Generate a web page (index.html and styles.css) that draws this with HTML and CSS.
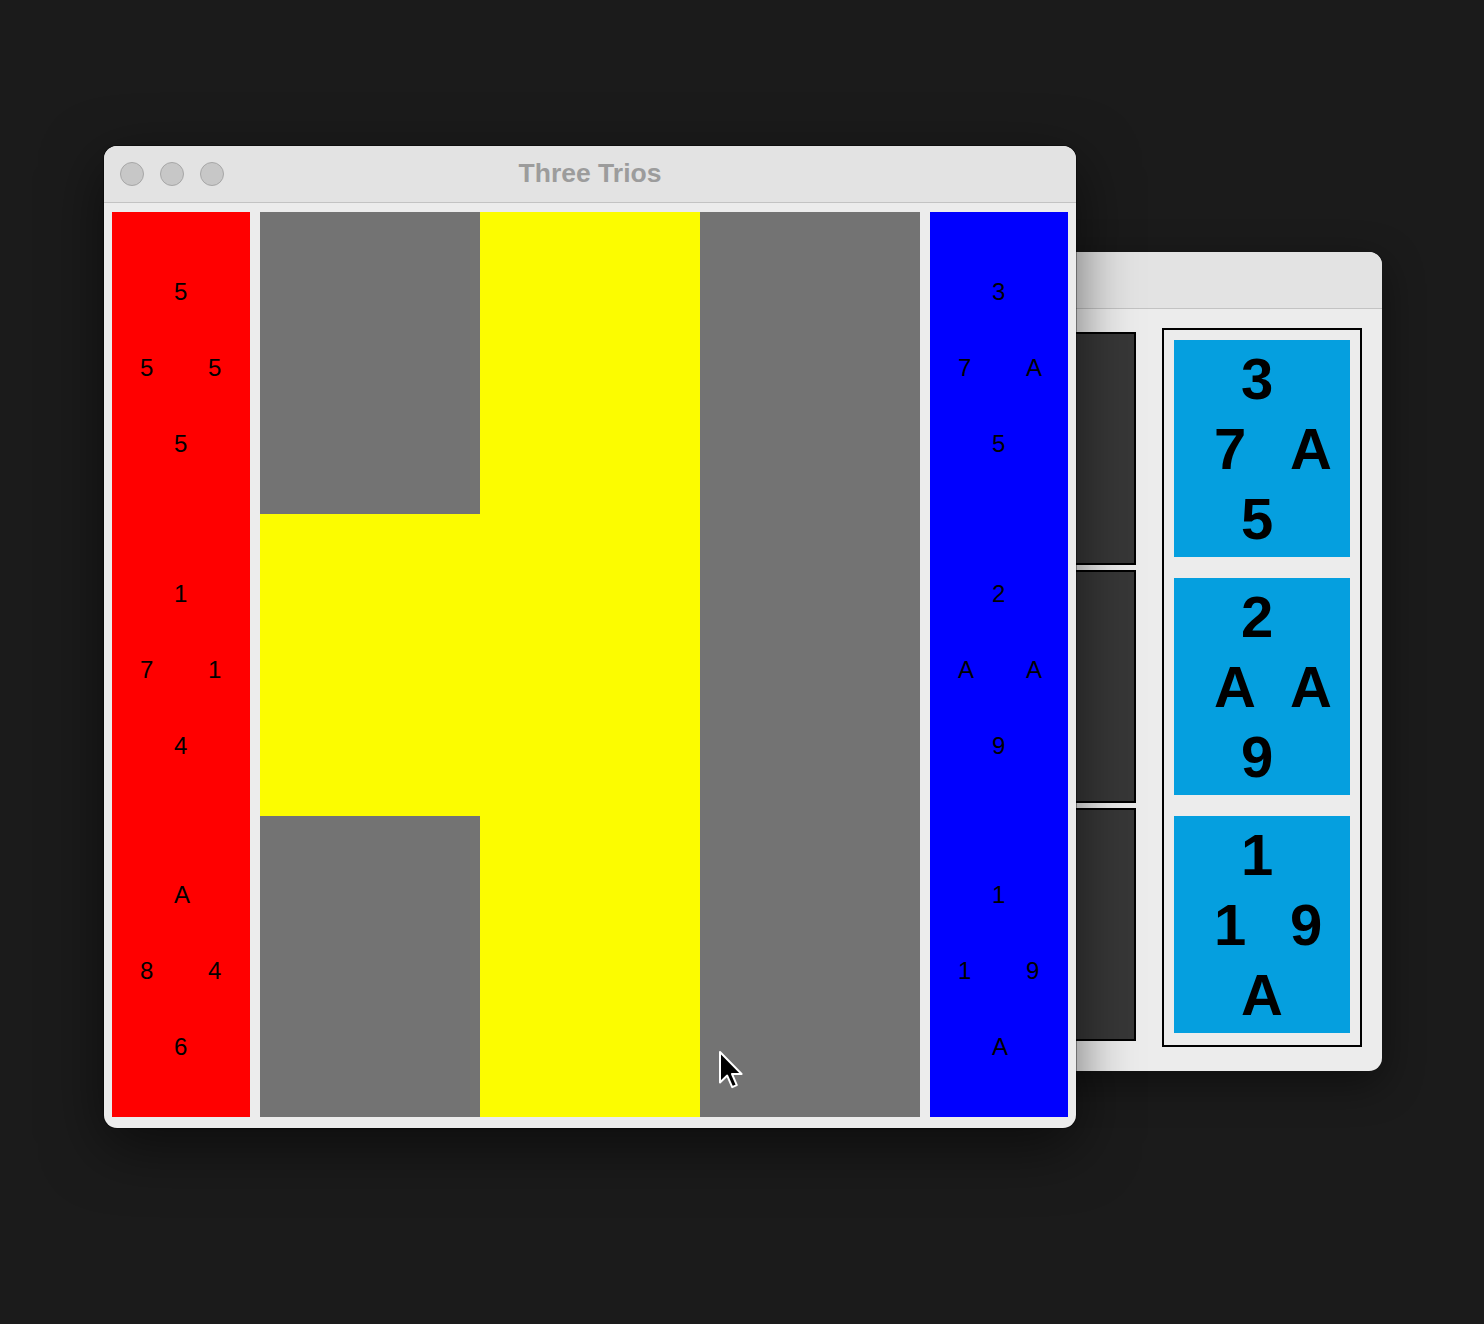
FILE: index.html
```html
<!DOCTYPE html>
<html>
<head>
<meta charset="utf-8">
<title>Three Trios</title>
<link rel="stylesheet" href="styles.css">
</head>
<body>
<div class="desktop">
  <div class="window back-window">
    <div class="titlebar"></div>
    <div class="back-body">
      <div class="hidden-hand">
        <div class="hidden-card"></div>
        <div class="hidden-card"></div>
        <div class="hidden-card"></div>
      </div>
      <div class="big-hand">
        <div class="big-card">
          <div class="big-row">3</div>
          <div class="big-mid"><span>7</span><span>A</span></div>
          <div class="big-row">5</div>
        </div>
        <div class="big-card">
          <div class="big-row">2</div>
          <div class="big-mid"><span>A</span><span>A</span></div>
          <div class="big-row">9</div>
        </div>
        <div class="big-card">
          <div class="big-row">1</div>
          <div class="big-mid"><span>1</span><span>9</span></div>
          <div class="big-row">A</div>
        </div>
      </div>
    </div>
  </div>

  <div class="window main-window">
    <div class="titlebar">
      <div class="lights">
        <span class="light"></span><span class="light"></span><span class="light"></span>
      </div>
      <div class="title">Three Trios</div>
    </div>
    <div class="main-body">
      <div class="hand red">
        <div class="card">
          <div class="row">5</div>
          <div class="mid"><span>5</span><span>5</span></div>
          <div class="row">5</div>
        </div>
        <div class="card">
          <div class="row">1</div>
          <div class="mid"><span>7</span><span>1</span></div>
          <div class="row">4</div>
        </div>
        <div class="card">
          <div class="row">A</div>
          <div class="mid"><span>8</span><span>4</span></div>
          <div class="row">6</div>
        </div>
      </div>
      <div class="board">
        <div class="cell hole"></div>
        <div class="cell empty"></div>
        <div class="cell hole"></div>
        <div class="cell empty"></div>
        <div class="cell empty"></div>
        <div class="cell hole"></div>
        <div class="cell hole"></div>
        <div class="cell empty"></div>
        <div class="cell hole"></div>
      </div>
      <div class="hand blue">
        <div class="card">
          <div class="row">3</div>
          <div class="mid"><span>7</span><span>A</span></div>
          <div class="row">5</div>
        </div>
        <div class="card">
          <div class="row">2</div>
          <div class="mid"><span>A</span><span>A</span></div>
          <div class="row">9</div>
        </div>
        <div class="card">
          <div class="row">1</div>
          <div class="mid"><span>1</span><span>9</span></div>
          <div class="row">A</div>
        </div>
      </div>
    </div>
  </div>

  <svg class="cursor" width="26" height="40" viewBox="0 0 13 20">
    <path d="M1 1 L1 16.2 L4.6 12.8 L7.1 18.6 L9.4 17.6 L7 12 L11.8 12 Z" fill="#000" stroke="#fff" stroke-width="1" stroke-linejoin="round"/>
  </svg>
</div>
</body>
</html>
```

FILE: styles.css
```css
* { box-sizing: border-box; }

html, body {
  margin: 0;
  padding: 0;
  background: #1b1b1b;
}

body {
  font-family: "Liberation Sans", Arial, sans-serif;
}

.desktop {
  position: relative;
  width: 1484px;
  height: 1324px;
  overflow: hidden;
}

.window {
  position: absolute;
  background: #ececec;
  border-radius: 13px;
  overflow: hidden;
}

.titlebar {
  height: 57px;
  background: #e3e3e3;
  border-bottom: 1px solid #c3c3c3;
  position: relative;
  display: flex;
  align-items: center;
}

/* ---------- back window ---------- */
.back-window {
  left: 930px;
  top: 252px;
  width: 452px;
  height: 819px;
  box-shadow: 0 12px 40px rgba(0, 0, 0, 0.45);
}

.back-body {
  display: flex;
  padding: 19px 20px 0 8px;
  gap: 26px;
}

.hidden-hand {
  width: 198px;
  display: flex;
  flex-direction: column;
  gap: 5px;
  margin-top: 4px;
}

.hidden-card {
  height: 233px;
  background: #373737;
  border: 2px solid #000;
}

.big-hand {
  width: 200px;
  border: 2px solid #000;
  padding: 10px 10px 12px 10px;
  display: flex;
  flex-direction: column;
  gap: 21px;
}

.big-card {
  height: 217px;
  background: #059fdf;
  padding-top: 4px;
  font-weight: bold;
  font-size: 58px;
  line-height: 70px;
  color: #000;
}

.big-row {
  padding-left: 67px;
}

.big-mid {
  padding-left: 40px;
  display: grid;
  grid-template-columns: 76px auto;
}

/* ---------- main window ---------- */
.main-window {
  left: 104px;
  top: 146px;
  width: 972px;
  height: 982px;
  box-shadow: 0 18px 60px rgba(0, 0, 0, 0.55), 0 0 0 1px rgba(0, 0, 0, 0.35);
}

.main-window .titlebar {
  height: 57px;
}

.lights {
  display: flex;
  gap: 16px;
  padding-left: 16px;
  padding-top: 0;
}

.light {
  width: 24px;
  height: 24px;
  border-radius: 50%;
  background: #c7c7c7;
  border: 1px solid #a7a7a7;
}

.title {
  position: absolute;
  left: 0;
  right: 0;
  top: 0;
  bottom: 0;
  display: flex;
  align-items: center;
  justify-content: center;
  font-family: "Liberation Sans", Arial, sans-serif;
  font-weight: bold;
  font-size: 26.5px;
  color: #9c9c9c;
  padding-bottom: 2px;
}

.main-body {
  display: flex;
  gap: 10px;
  padding: 9px 8px 10px 8px;
  height: 924px;
}

.hand {
  width: 138px;
  display: flex;
  flex-direction: column;
}

.hand.red { background: #ff0000; }
.hand.blue { background: #0000ff; }

.card {
  flex: 1;
  padding-top: 42px;
  font-size: 24px;
  line-height: 76px;
  color: #000;
}

.row {
  padding-left: 62px;
}

.mid {
  padding-left: 28px;
  display: grid;
  grid-template-columns: 68px auto;
}

.board {
  width: 660px;
  display: grid;
  grid-template-columns: repeat(3, 1fr);
  grid-template-rows: 302px 302px 301px;
}

.cell.hole { background: #737373; }
.cell.empty { background: #fcfc00; }

.cursor {
  position: absolute;
  left: 718px;
  top: 1050px;
}
```
